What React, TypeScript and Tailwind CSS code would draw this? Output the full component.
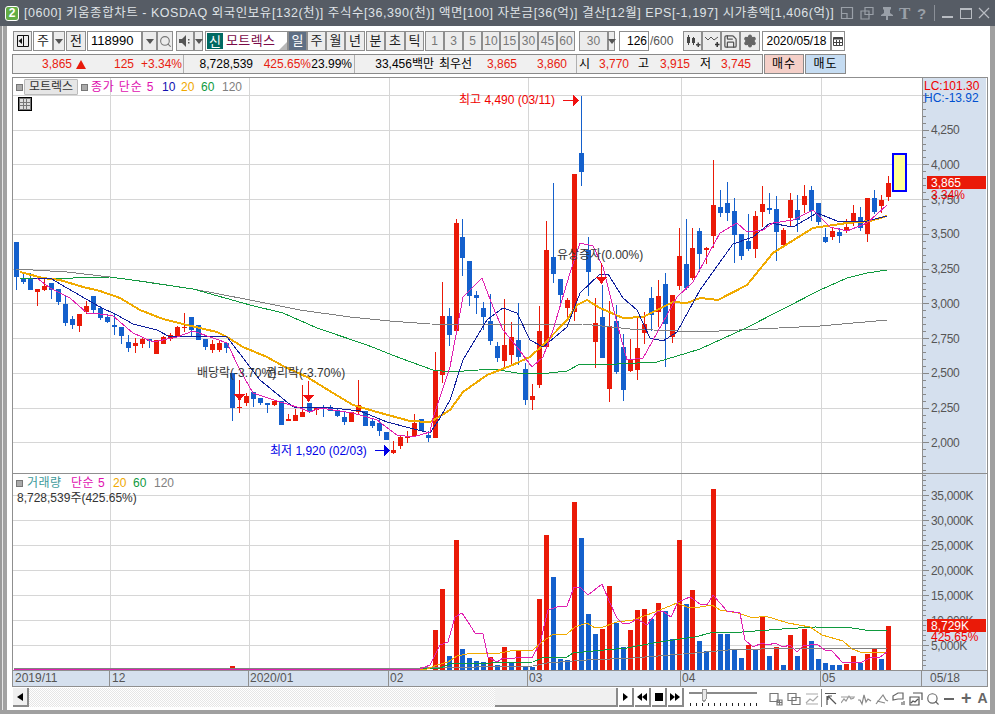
import { ReactNode } from "react";
import { Search, Save, Settings } from "lucide-react";
import { twMerge } from "tailwind-merge";

type Row = [number, number, number, number, string];

// body top, body bottom, wick top, wick bottom, colour (read off 3x crops, offset per segment)
const seg1: Row[] = [
  [36,140,36,180,"b"],[145,157,125,162,"b"],[145,180,130,180,"b"],[177,186,177,228,"r"],[167,180,142,183,"r"],
  [160,180,160,207,"b"],[177,215,177,225,"b"],[222,278,195,288,"b"],[267,285,258,298,"b"],[252,288,252,306,"r"],
  [228,247,212,252,"r"],[198,240,198,252,"b"],[233,264,228,270,"b"],[261,276,252,280,"b"],[285,290,252,316,"b"],
  [291,318,291,342,"b"],[336,354,316,366,"b"],[339,347,324,369,"r"],[326,342,322,356,"r"],[328,333,326,354,"b"],
  [331,372,331,372,"r"],[321,342,318,342,"r"],[315,326,309,333,"r"],[291,318,288,321,"r"],[291,294,249,306,"r"],
  [261,300,261,320,"b"],[285,330,285,330,"b"],[327,350,327,360,"b"],[342,360,330,369,"r"],[339,360,330,365,"r"],
  [339,354,339,369,"b"],[429,534,429,573,"b"],[530,534,510,549,"r"],[498,519,489,528,"r"],[486,507,486,531,"b"],
  [504,519,504,525,"b"],[519,525,519,549,"b"],[513,525,510,528,"r"],[513,585,513,585,"b"],[567,572,552,572,"r"],
  [555,572,537,572,"r"],[546,561,465,561,"r"],[519,546,519,549,"b"],[531,540,531,554,"r"],[534,537,525,561,"b"],
  [534,543,525,543,"b"],[543,558,537,561,"b"],[561,576,546,585,"b"],[546,576,546,576,"r"],[525,546,450,552,"r"],
  [543,588,543,588,"b"],[573,588,564,594,"b"],[579,603,567,618,"b"],[606,630,606,630,"b"],[660,669,633,672,"r"],
  [621,648,618,657,"r"],[618,624,603,639,"r"],[579,618,552,618,"r"],[567,603,567,603,"b"],[615,624,603,636,"b"],
  [423,624,366,624,"r"],[258,435,156,459,"r"],[258,315,234,348,"b"],
];
const seg2: Row[] = [
  [399,723,387,735,"r"],[441,504,387,558,"b"],[513,618,513,648,"b"],[615,624,603,672,"b"],[654,681,636,720,"b"],
  [693,753,612,765,"b"],[768,804,756,816,"b"],[765,813,627,831,"r"],[741,795,696,822,"r"],[750,801,639,825,"b"],
  [837,930,819,945,"b"],[918,930,882,960,"r"],[723,885,648,894,"r"],[480,771,393,771,"r"],[501,552,279,579,"b"],
  [567,615,567,642,"b"],[630,654,624,690,"r"],[252,666,252,693,"r"],[189,246,18,288,"b"],[480,546,441,618,"b"],
  [699,756,624,834,"r"],[681,804,585,804,"b"],[709,897,633,936,"r"],[693,846,645,852,"b"],[771,900,732,933,"b"],
  [810,843,747,846,"r"],[774,840,681,870,"r"],[702,729,666,762,"r"],[624,675,591,723,"b"],[618,666,570,711,"r"],
  [582,702,549,831,"b"],[615,741,615,759,"r"],[498,588,414,600,"r"],[522,594,387,600,"b"],[474,564,414,570,"r"],
];
const seg3: Row[] = [
  [303,372,294,426,"b"],[354,360,351,402,"r"],[225,318,90,354,"r"],[231,249,180,261,"b"],[219,249,156,273,"b"],
  [243,315,204,399,"b"],[312,378,312,390,"b"],[333,357,252,363,"b"],[258,357,243,384,"r"],[222,246,168,291,"r"],
  [234,240,189,252,"b"],[237,306,198,393,"b"],[300,345,294,351,"r"],[210,264,189,291,"r"],[240,270,195,306,"b"],
  [198,225,165,249,"r"],[180,243,168,273,"b"],[219,276,219,285,"b"],[321,336,294,339,"b"],[303,321,294,330,"r"],
  [306,318,294,339,"b"],[291,303,267,309,"r"],[249,276,225,288,"r"],[261,294,231,303,"b"],[204,312,204,336,"r"],
  [204,246,180,252,"b"],[210,228,195,249,"r"],[159,201,138,213,"r"],
];
const toReal = (rows: Row[], off: number): Row[] =>
  rows.map(([a, b, c, d, k]) => [off + a / 3, off + b / 3, off + c / 3, off + d / 3, k]);
const candles = [...toReal(seg1, 230), ...toReal(seg2, 90), ...toReal(seg3, 130)];
const cx = (i: number) => Math.round(16.4 + 6.97 * i);

const RED = "#ea1a08";
const BLUE = "#1460cc";

const ma120 = "16,269 67,272 110,277 147,282 193,289 250,300 300,310 350,317 390,321 430,324 530,325 583,324 630,329 700,332 758,329 820,326 887,320";
const ma60 = "20,278 73,278 110,277 132,280 193,289 250,305 283,313 317,328 367,345 400,358 433,370 450,372 493,369 517,373 540,374 567,371 580,364 617,364 657,362 687,353 700,349 744,329 820,290 847,278 867,273 887,270";
const ma20 = "20,272 43,278 60,280 83,287 100,291 120,298 140,310 163,319 187,325 217,332 227,337 243,347 267,357 283,366 307,377 333,393 353,405 377,412 410,421 430,422 437,418 450,410 463,392 487,375 510,366 530,357 543,345 567,320 577,305 587,300 600,308 623,318 643,317 673,302 687,303 700,298 718,300 747,285 773,253 797,238 813,228 847,223 870,221 887,216";
const ma10 = "33,278 50,278 67,288 100,307 117,315 133,324 157,330 170,337 197,336 227,337 260,380 293,407 333,408 360,411 387,422 410,428 430,433 440,418 450,400 463,360 487,320 503,308 517,313 530,340 543,347 567,327 580,293 600,274 608,274 623,298 637,310 650,338 663,341 677,332 700,290 720,262 733,244 753,237 770,223 793,227 817,213 837,221 863,222 887,216";
const ma5 = "37,278 50,288 70,298 87,313 100,314 113,316 133,333 153,342 177,337 193,331 213,338 227,343 240,370 253,393 277,401 300,408 310,412 320,408 353,413 377,420 397,435 413,437 430,432 433,418 450,367 463,297 482,278 493,307 503,330 517,347 532,367 543,357 553,330 570,273 580,243 593,246 603,267 617,323 627,360 643,358 657,333 677,297 693,282 720,233 737,223 747,232 763,230 773,223 793,220 813,210 830,227 847,231 867,223 887,205";

const volTops: [number, string][] = [
  [450,"r"],[327,"r"],[528,"b"],[180,"r"],[507,"b"],[534,"b"],[543,"b"],[546,"b"],[531,"r"],[555,"b"],
  [501,"r"],[546,"b"],[513,"r"],[557,"b"],[561,"b"],[357,"r"],[165,"r"],[291,"b"],[537,"b"],[540,"b"],
  [66,"r"],[174,"b"],[402,"b"],[462,"b"],[447,"r"],[318,"r"],[429,"b"],[501,"b"],[450,"r"],[390,"r"],
  [387,"r"],[417,"b"],[369,"r"],[393,"b"],[477,"b"],[180,"r"],[372,"b"],[330,"r"],[483,"b"],[513,"b"],
  [27,"r"],[462,"b"],[462,"b"],[507,"b"],[534,"b"],[495,"r"],[507,"b"],[411,"r"],[528,"b"],[501,"r"],
  [555,"b"],[465,"r"],[528,"b"],[447,"r"],[483,"b"],[537,"b"],[549,"b"],[555,"b"],[555,"b"],[552,"r"],
  [528,"r"],[549,"b"],[522,"r"],[504,"r"],[537,"b"],[438,"r"],
];

const vol5 = "14,669 420,669 430,665 440,645 448,642 455,617 462,613 468,622 475,633 483,634 488,657 497,662 503,658 512,659 518,657 532,658 540,643 548,610 557,607 567,606 574,587 580,587 588,595 602,584 610,603 617,618 623,624 630,623 637,619 647,625 657,612 663,611 671,617 678,602 690,597 700,604 707,605 713,595 727,611 740,613 745,640 753,647 762,643 768,645 775,643 783,647 790,645 797,652 803,646 817,644 825,650 832,651 843,663 862,662 872,657 880,657 887,652";
const vol20 = "14,669 427,669 437,665 448,662 457,656 467,654 487,653 500,653 515,650 533,650 542,642 552,635 567,634 575,627 587,623 595,628 603,627 617,622 633,620 647,615 660,610 677,603 687,607 700,607 712,605 720,610 738,613 753,618 765,616 788,623 810,627 822,635 843,641 852,649 863,653 887,652";
const vol60 = "14,669 420,669 440,668 450,664 533,662 542,658 567,657 573,653 593,651 627,648 653,643 680,639 695,637 710,633 742,632 782,629 815,627 852,628 872,631 887,630";
const vol120 = "14,668 420,668 533,666 547,663 587,660 633,658 695,653 728,650 795,648 887,648";

const vLines = [110, 249, 389, 528, 681, 821];
const priceLines = [95, 130, 164, 199, 234, 269, 303, 338, 373, 408, 442];
const volLines = [495, 520, 545, 570, 595, 620, 645];

const priceLabels: [string, number][] = [
  ["4,250", 129.6], ["4,000", 164.3], ["3,750", 199], ["3,500", 233.8], ["3,250", 268.6], ["3,000", 303.3],
  ["2,750", 338], ["2,500", 372.8], ["2,250", 407.6], ["2,000", 442.3],
];
const volLabels: [string, number][] = [
  ["35,000K", 495], ["30,000K", 520], ["25,000K", 545], ["20,000K", 570], ["15,000K", 595], ["10,000K", 620], ["5,000K", 645],
];

const Btn = ({ className = "", children }: { className?: string; children?: ReactNode }) => (
  <div className={twMerge("flex h-[20px] shrink-0 items-center justify-center border border-[#8e8e8e] bg-[#ececec] text-[13px] text-[#222]", className)}>
    {children}
  </div>
);

const Drop = ({ className = "" }: { className?: string }) => (
  <Btn className={className}>
    <span className="h-0 w-0 border-x-[4px] border-t-[5px] border-x-transparent border-t-[#555]" />
  </Btn>
);

const Marker = ({ className = "" }: { className?: string }) => (
  <span className={twMerge("h-[7px] w-[7px] shrink-0 border border-[#777] bg-[#aaa]", className)} />
);

const PriceChart = () => (
  <svg viewBox="13 78 909 395" width={909} height={395} className="block shrink-0">
    <g shapeRendering="crispEdges" stroke="#d6d6d6">
      {priceLines.map((y) => <line key={y} x1={13} x2={922} y1={y + 0.5} y2={y + 0.5} />)}
      {vLines.map((x) => <line key={x} x1={x + 0.5} x2={x + 0.5} y1={78} y2={473} />)}
    </g>
    <g shapeRendering="crispEdges">
      {candles.map(([a, b, c, d, k], i) => {
        const x = cx(i);
        const fill = k === "r" ? RED : BLUE;
        return (
          <g key={i} fill={fill}>
            <rect x={x} y={Math.round(c)} width={1} height={Math.max(1, Math.round(d - c))} />
            <rect x={x - 2} y={Math.round(a)} width={5} height={Math.max(1, Math.round(b - a))} />
          </g>
        );
      })}
    </g>
    <g fill="none" shapeRendering="crispEdges" strokeLinejoin="round">
      <polyline points={ma120} stroke="#808080" />
      <polyline points={ma60} stroke="#0f9a3e" />
      <polyline points={ma20} stroke="#f0aa00" strokeWidth={2} />
      <polyline points={ma10} stroke="#10209c" />
      <polyline points={ma5} stroke="#e020b0" />
    </g>
    <rect x={893} y={154} width={13} height={37} fill="#ffff99" stroke="#0000ff" strokeWidth={2} shapeRendering="crispEdges" />
    <g fill="#f01010" shapeRendering="crispEdges">
      <rect x={239} y={380} width={1} height={14} />
      <path d="M234 394h11l-5.500 7z" />
      <rect x={308} y={381} width={1} height={14} />
      <path d="M303 395h11l-5.500 7z" />
      <rect x={601} y={263} width={1} height={14} />
      <path d="M596 277h11l-5.500 7z" />
      <rect x={563} y={100} width={11} height={1} />
      <path d="M573 95l6 5.500-6 5.500z" />
    </g>
    <g fill="#0000e6" shapeRendering="crispEdges">
      <rect x={375} y={450} width={10} height={1} />
      <path d="M384 445l6 5.500-6 5.500z" />
    </g>
    <g fontSize={12}>
      <text x={197} y={377} fill="#333">배당락(-3.70%)</text>
      <text x={266} y={377} fill="#333">권리락(-3.70%)</text>
      <text x={557} y={259} fill="#333">유상증자(0.00%)</text>
      <text x={459} y={104} fill="#f00000">최고 4,490 (03/11)</text>
      <text x={270} y={455} fill="#0000e6">최저 1,920 (02/03)</text>
    </g>
  </svg>
);

const VolumeChart = () => (
  <svg viewBox="13 474 909 196" width={909} height={196} className="block shrink-0">
    <g shapeRendering="crispEdges" stroke="#d6d6d6">
      {volLines.map((y) => <line key={y} x1={13} x2={922} y1={y + 0.5} y2={y + 0.5} />)}
      {vLines.map((x) => <line key={x} x1={x + 0.5} x2={x + 0.5} y1={474} y2={670} />)}
    </g>
    <g shapeRendering="crispEdges">
      <rect x={14} y={668} width={2} height={2} fill={RED} />
      <rect x={230} y={666} width={5} height={4} fill={RED} />
      {volTops.map(([z, k], i) => {
        const top = Math.round(480 + z / 3);
        return <rect key={i} x={cx(i + 60) - 2} y={top} width={5} height={670 - top} fill={k === "r" ? RED : BLUE} />;
      })}
    </g>
    <g fill="none" shapeRendering="crispEdges">
      <polyline points={vol120} stroke="#808080" />
      <polyline points={vol60} stroke="#0f9a3e" />
      <polyline points={vol20} stroke="#f0aa00" />
      <polyline points={vol5} stroke="#e020b0" />
    </g>
  </svg>
);

const Axis = ({ y0, h, labels, step }: { y0: number; h: number; labels: [string, number][]; step: number }) => {
  const ticks: { y: number; major: boolean }[] = [];
  const first = labels[0][1];
  for (let n = -5; n < 60; n++) {
    const y = first + (n * step) / 5;
    if (y > y0 && y < y0 + h) ticks.push({ y: Math.round(y), major: ((n % 5) + 5) % 5 === 0 });
  }
  return (
    <svg viewBox={`923 ${y0} 64 ${h}`} width={64} height={h} className="absolute left-0 top-0 block">
      <g shapeRendering="crispEdges" stroke="#888">
        {ticks.map((t) => <line key={t.y} x1={923} x2={t.major ? 929 : 926} y1={t.y + 0.5} y2={t.y + 0.5} />)}
      </g>
      <g fontSize={12} fill="#555">
        {labels.map(([s, y]) => <text key={s} x={931} y={y + 4.500} letterSpacing={-0.35}>{s}</text>)}
      </g>
    </svg>
  );
};

const Stroke = ({ d, className = "" }: { d: string; className?: string }) => (
  <svg viewBox="0 0 14 14" className={twMerge("h-[14px] w-[14px]", className)} fill="none" stroke="currentColor" strokeWidth={1.2}>
    <path d={d} />
  </svg>
);

export default function App() {
  return (
    <div className="flex h-[714px] w-[995px] flex-col overflow-hidden bg-white text-[12px] text-black [font-family:'Liberation_Sans','Noto_Sans_CJK_KR',sans-serif]">
      {/* title bar */}
      <div className="flex h-[26px] shrink-0 items-center bg-[#565c65] pl-[5px] text-[#dfe2e6]">
        <div className="flex h-[15px] w-[14px] items-center justify-center rounded-[3px] border border-white bg-[#63ad45] text-[12px] font-bold leading-none text-white">2</div>
        <div className="ml-[5px] w-[812px] whitespace-nowrap text-[12.5px] tracking-[0.54px]">
          [0600] 키움종합차트 - KOSDAQ 외국인보유[132(천)] 주식수[36,390(천)] 액면[100] 자본금[36(억)] 결산[12월] EPS[-1,197] 시가총액[1,406(억)]
        </div>
        <div className="ml-[4px] flex items-center text-[#9aa0a8]">
          <Stroke d="M1.500 1.500h11v11h-11zM1.500 7.500h5.500v5" />
          <Stroke className="ml-[6px]" d="M5 1.500h8v7h-8zM1 5h8v8h-8z" />
          <svg viewBox="0 0 14 14" className="ml-[6px] h-[14px] w-[14px]" fill="currentColor"><path d="M3 1h8v2l-1 1v3l3 2v1H8v4H6v-4H1V9l3-2V4L3 3z" /></svg>
          <span className="ml-[5px] w-[13px] text-[17px] font-bold leading-none [font-family:'Liberation_Serif',serif]">T</span>
          <span className="ml-[5px] w-[12px] text-[15px] font-bold leading-none">?</span>
          <span className="ml-[5px] h-[16px] w-px bg-[#8b9098]" />
          <span className="ml-[7px] mt-[8px] h-[2px] w-[11px] bg-[#b8bcc2]" />
          <span className="ml-[7px] h-[11px] w-[12px] border border-t-2 border-[#b8bcc2]" />
          <Stroke className="ml-[5px] text-[#b8bcc2]" d="M2 2l10 10M12 2L2 12" />
        </div>
      </div>

      <div className="flex min-h-0 flex-1">
        {/* left window edge */}
        <div className="flex w-[7px] shrink-0">
          <div className="w-[2px] bg-[#9a9a9a]" />
          <div className="w-px bg-[#e6e6e6]" />
          <div className="w-[4px] bg-[#a2a2a2]" />
        </div>

        <div className="flex min-w-0 flex-1 flex-col pl-[5px]">
          {/* toolbar */}
          <div className="mt-[5px] flex h-[20px] shrink-0 pl-px">
            <Btn className="w-[19px]">
              <svg viewBox="0 0 14 14" className="h-[14px] w-[14px]"><path d="M1.500 1.500h11v11h-11z" fill="none" stroke="#111" /><path d="M6 4v6L2.500 7z" fill="#111" /><path d="M7 2h1v10H7z" fill="#111" /></svg>
            </Btn>
            <Btn className="ml-px w-[20px] bg-white">주</Btn>
            <Drop className="w-[12px]" />
            <Btn className="ml-px w-[20px]">전</Btn>
            <div className="ml-px flex h-[20px] w-[55px] items-center border border-[#8e8e8e] bg-white pl-[3px] text-[13px]">118990</div>
            <Drop className="w-[15px]" />
            <Btn className="w-[16px]"><Search size={13} className="text-[#777]" /></Btn>
            <Btn className="ml-[3px] w-[18px]">
              <svg viewBox="0 0 14 14" className="h-[14px] w-[14px]" fill="#555"><path d="M1 5h3l4-4v12l-4-4H1z" /><path d="M10 5h1.500v1.500H10zM10 8h1.500v1.500H10z" /></svg>
            </Btn>
            <Drop className="w-[9px]" />
            <div className="relative ml-[2px] flex h-[20px] w-[83px] items-center border border-[#8e8e8e] bg-white pl-px">
              <span className="flex h-[16px] w-[16px] items-center justify-center bg-[#006a62] text-[13px] leading-none text-white">신</span>
              <span className="ml-[3px] text-[13px] tracking-[0.4px] text-[#7a0a48]">모트렉스</span>
              <span className="absolute bottom-0 right-0 h-0 w-0 border-b-[8px] border-l-[8px] border-b-[#b8b8b8] border-l-transparent" />
            </div>
            <Btn className="w-[19px] bg-[#5f6f84] text-white">일</Btn>
            <Btn className="w-[19px]">주</Btn>
            <Btn className="w-[19px]">월</Btn>
            <Btn className="w-[20px]">년</Btn>
            <Btn className="ml-px w-[19px]">분</Btn>
            <Btn className="w-[20px]">초</Btn>
            <Btn className="w-[19px]">틱</Btn>
            <Btn className="ml-px w-[19px] text-[12px] text-[#777]">1</Btn>
            <Btn className="w-[19px] text-[12px] text-[#777]">3</Btn>
            <Btn className="w-[19px] text-[12px] text-[#777]">5</Btn>
            <Btn className="w-[18px] text-[12px] text-[#777]">10</Btn>
            <Btn className="w-[19px] text-[12px] text-[#777]">15</Btn>
            <Btn className="w-[19px] text-[12px] text-[#777]">30</Btn>
            <Btn className="w-[19px] text-[12px] text-[#777]">45</Btn>
            <Btn className="w-[18px] text-[12px] text-[#777]">60</Btn>
            <Btn className="ml-[4px] w-[29px] text-[12px] text-[#777]">30</Btn>
            <Drop className="w-[7px]" />
            <div className="ml-[4px] flex h-[20px] w-[30px] items-center justify-end border border-[#8e8e8e] bg-white pr-px">126</div>
            <span className="flex w-[34px] items-center pl-px text-[#555]">/600</span>
            <Btn className="w-[19px]">
              <svg viewBox="0 0 16 14" className="h-[14px] w-[16px]" fill="#444"><path d="M3 1h1v2h1v6H4v2H3V9H2V3h1zM8 3h1v1h1v5H9v2H8V9H7V4h1z" /><path d="M11 10h1.500V8.500H14V10h1.500v1.500H14V13h-1.500v-1.500H11z" /></svg>
            </Btn>
            <Btn className="w-[19px]">
              <svg viewBox="0 0 16 14" className="h-[14px] w-[16px]" fill="none" stroke="#555"><path d="M1 3l3 3 3-3 3 3 4-3" /><path d="M11 10.500h4.500M13.200 8v5" stroke="#333" strokeWidth={1.500} /></svg>
            </Btn>
            <Btn className="w-[19px]"><Save size={15} className="text-[#555]" /></Btn>
            <Btn className="w-[20px]"><Settings size={14} fill="#666" className="text-[#666]" /></Btn>
            <div className="ml-[2px] flex h-[20px] w-[69px] items-center justify-center border border-[#8e8e8e] bg-white">2020/05/18</div>
            <Btn className="w-[14px] bg-white">
              <svg viewBox="0 0 12 12" className="h-[12px] w-[12px]" fill="none" stroke="#444"><path d="M1.500 2.500h9v8h-9z" /><path d="M1.500 3.500h9" strokeWidth={2} /><path d="M4.500 5v5M7.500 5v5M2 7.500h8" /></svg>
            </Btn>
          </div>

          {/* quote strip */}
          <div className="mt-[3px] flex h-[20px] shrink-0">
            <div className="flex h-[20px] w-[751px] items-center border border-[#8a8a8a] bg-[#f0f0f0] text-[#e8200f]">
              <div className="flex h-full w-[171px] items-center border-r border-[#b0b0b0]">
                <span className="w-[59px] text-right">3,865</span>
                <span className="ml-[4px] h-0 w-0 border-x-[5px] border-b-[9px] border-x-transparent border-b-[#e8190a]" />
                <span className="w-[48px] text-right">125</span>
                <span className="w-[48px] text-right">+3.34%</span>
              </div>
              <div className="flex h-full w-[171px] items-center border-r border-[#b0b0b0]">
                <span className="w-[69px] text-right text-black">8,728,539</span>
                <span className="w-[58px] text-right">425.65%</span>
                <span className="w-[41px] text-right text-black">23.99%</span>
              </div>
              <div className="flex h-full w-[222px] items-center border-r border-[#b0b0b0]">
                <span className="w-[79px] text-right text-black">33,456백만</span>
                <span className="ml-[5px] w-[35px] text-black">최우선</span>
                <span className="w-[43px] text-right">3,865</span>
                <span className="w-[50px] text-right">3,860</span>
              </div>
              <div className="flex h-full items-center">
                <span className="ml-[2px] w-[10px] text-black">시</span>
                <span className="w-[40px] text-right">3,770</span>
                <span className="w-[20px] text-right text-black">고</span>
                <span className="w-[41px] text-right">3,915</span>
                <span className="w-[21px] text-right text-black">저</span>
                <span className="w-[40px] text-right">3,745</span>
              </div>
            </div>
            <div className="ml-[1px] flex h-[20px] w-[40px] items-center justify-center border border-[#8a8a8a] bg-[#f4cfc8] tracking-[1px]">매수</div>
            <div className="ml-[1px] flex h-[20px] w-[41px] items-center justify-center border border-[#8a8a8a] bg-[#c5dcf2] tracking-[1px]">매도</div>
          </div>

          {/* chart */}
          <div className="mt-[3px] flex w-[976px] shrink-0 flex-col border border-[#8f8f8f]">
            <div className="relative flex h-[396px] border-b border-[#8f8f8f]">
              <PriceChart />
              <div className="absolute left-[3px] top-[1px] flex h-[16px] items-center">
                <Marker />
                <span className="ml-px flex h-[16px] w-[54px] items-center justify-center rounded-[1px] border border-[#bbb] bg-[#e6e6e6] text-[#333]">모트렉스</span>
                <Marker className="ml-[3px]" />
                <span className="ml-[3px] w-[71px] tracking-[0.8px] text-[#e010b0]">종가 단순 5</span>
                <span className="w-[19px] text-[#1010b0]">10</span>
                <span className="w-[20px] text-[#f0a800]">20</span>
                <span className="w-[21px] text-[#0f9a3e]">60</span>
                <span className="text-[#808080]">120</span>
              </div>
              <div className="absolute left-[5px] top-[19px] grid h-[14px] w-[14px] grid-cols-3 grid-rows-3 gap-px border border-black bg-[#777] p-px">
                {[0, 1, 2, 3, 4, 5, 6, 7, 8].map((n) => <span key={n} className="bg-[#ddd]" />)}
              </div>
              <div className="relative w-[64px] shrink-0 border-l border-[#8f8f8f] bg-[#d5e0ee]">
                <Axis y0={78} h={395} labels={priceLabels} step={34.75} />
                <div className="absolute left-[1px] top-[2px] leading-[12px] text-[#f00000]">LC:101.30</div>
                <div className="absolute left-[1px] top-[14px] leading-[12px] text-[#0050d0]">HC:-13.92</div>
                <div className="absolute left-[4px] top-[98px] flex h-[13px] w-[59px] items-center bg-[#ea1a08] pl-[4px] text-white">3,865</div>
                <div className="absolute left-[8px] top-[111px] leading-[13px] text-[#f00000]">3.34%</div>
              </div>
            </div>

            <div className="relative flex h-[196px]">
              <VolumeChart />
              <div className="absolute left-[3px] top-[2px] flex h-[14px] items-center">
                <Marker />
                <span className="ml-[4px] w-[44px] tracking-[0.5px] text-[#3c9a9a]">거래량</span>
                <span className="w-[42px] tracking-[0.5px] text-[#e010b0]">단순 5</span>
                <span className="w-[20px] text-[#f0a800]">20</span>
                <span className="w-[21px] text-[#0f9a3e]">60</span>
                <span className="text-[#808080]">120</span>
              </div>
              <div className="absolute left-[4px] top-[15px] text-[#333]">8,728,539주(425.65%)</div>
              <div className="relative w-[64px] shrink-0 border-l border-[#8f8f8f] bg-[#d5e0ee]">
                <Axis y0={474} h={196} labels={volLabels} step={25} />
                <div className="absolute left-[4px] top-[145px] flex h-[13px] w-[59px] items-center bg-[#ea1a08] pl-[4px] text-white">8,729K</div>
                <div className="absolute left-[8px] top-[157px] leading-[13px] text-[#f00000]">425.65%</div>
              </div>
            </div>

            <div className="flex h-[16px] border-t border-[#8f8f8f] bg-[#d5e0ee] leading-[15px] text-[#555]">
              <div className="w-[97px] border-r border-[#8f8f8f] pl-[2px]">2019/11</div>
              <div className="w-[139px] border-r border-[#8f8f8f] pl-[2px]">12</div>
              <div className="w-[140px] border-r border-[#8f8f8f] pl-[1px]">2020/01</div>
              <div className="w-[139px] border-r border-[#8f8f8f] pl-[1px]">02</div>
              <div className="w-[153px] border-r border-[#8f8f8f] pl-[1px]">03</div>
              <div className="w-[140px] border-r border-[#8f8f8f] pl-[1px]">04</div>
              <div className="w-[101px] border-r border-[#8f8f8f] pl-[1px]">05</div>
              <div className="flex-1 pl-[8px]">05/18</div>
            </div>
          </div>

          {/* bottom bar */}
          <div className="mt-[1px] flex h-[21px] shrink-0 items-start pl-px">
            <div className="flex h-[19px] w-[16px] items-center justify-center border-b-2 border-r-2 border-[#8a8a8a] bg-[#f0f0f0]">
              <span className="h-0 w-0 border-y-[4px] border-r-[6px] border-y-transparent border-r-black" />
            </div>
            <div className="h-[19px] w-[466px] bg-[repeating-conic-gradient(#e6e6e6_0_25%,#ffffff_0_50%)] bg-[length:2px_2px]" />
            <div className="h-[19px] w-[123px] border-b-2 border-r-2 border-[#8a8a8a] bg-[#f0f0f0]" />
            <div className="ml-[1px] flex h-[19px] w-[15px] items-center justify-center border-b-2 border-r-2 border-[#8a8a8a] bg-white">
              <span className="h-0 w-0 border-y-[4px] border-l-[5px] border-y-transparent border-l-black" />
            </div>
            <div className="ml-[1px] flex h-[19px] w-[16px] items-center justify-center border-b-2 border-r-2 border-[#8a8a8a] bg-white">
              <span className="h-0 w-0 border-y-[4px] border-r-[5px] border-y-transparent border-r-black" />
              <span className="h-0 w-0 border-y-[4px] border-r-[5px] border-y-transparent border-r-black" />
            </div>
            <div className="ml-[1px] flex h-[19px] w-[15px] items-center justify-center border-b-2 border-r-2 border-[#8a8a8a] bg-white">
              <span className="h-[8px] w-[8px] bg-black" />
            </div>
            <div className="ml-[1px] flex h-[19px] w-[16px] items-center justify-center border-b-2 border-r-2 border-[#8a8a8a] bg-white">
              <span className="h-0 w-0 border-y-[4px] border-l-[5px] border-y-transparent border-l-black" />
              <span className="h-0 w-0 border-y-[4px] border-l-[5px] border-y-transparent border-l-black" />
            </div>
            <svg viewBox="0 0 80 20" className="ml-[3px] h-[20px] w-[80px]" shapeRendering="crispEdges">
              <rect x={2} y={4} width={68} height={2} fill="#8a8a8a" />
              <path d="M15 1h4v10l-2 3-2-3z" fill="#e8e8e8" stroke="#999" />
              {[3, 9, 15, 21, 27, 33, 39, 45, 51, 57, 63, 69].map((x) => <rect key={x} x={x} y={15} width={1} height={3} fill="#222" />)}
            </svg>
            <div className="ml-[2px] flex items-center text-[#777]">
              <Stroke d="M1 1.500h8v8H1zM8 8h5v5H8zM8 10.500h5M10.500 8v5" className="mt-[2px]" />
              <Stroke d="M1 1.500h8v7H1zM5 5.500h8v7H5z" className="ml-[4px] mt-[2px]" />
              <Stroke d="M1 2h12M1 12h12M1 11l4-4 3 2 5-5" className="ml-[4px] mt-[2px] text-[#aaa]" />
              <span className="ml-[2px] h-[18px] w-px bg-[#888]" />
              <Stroke d="M1 1.500h11M3 4v9M4 4l8 8M4 4h4M4 4v4" className="ml-[2px] mt-[2px] text-[#555]" />
              <Stroke d="M0 11l3-4 2 2 3-5 2 3 3-1M0 5h14" className="ml-[3px] mt-[2px] text-[#999]" />
              <Stroke d="M0 8h2l2 4 2-9 2 7 2-3 3 2" className="ml-[3px] mt-[2px] text-[#888]" />
              <Stroke d="M1 12l7-9 3 5 2 1M2 9l8 2" className="ml-[3px] mt-[2px] text-[#888]" />
              <Stroke d="M1 4l5-3h5v6H6l-5 1zM10 10v3M12 9v4" className="ml-[3px] mt-[2px] text-[#666]" />
              <Stroke d="M4 1h9v7M1 5h9v8H1zM2 11l2-2 2 1 3-3" className="ml-[3px] mt-[2px] text-[#555]" />
              <Search size={14} className="ml-[3px] mt-[2px] text-[#666]" />
              <span className="ml-[4px] mt-[2px] h-[2px] w-[10px] bg-[#666]" />
              <span className="ml-[7px] mt-[1px] text-[18px] font-bold leading-none text-[#666]">+</span>
              <span className="ml-[6px] mt-[1px] text-[14px] font-bold leading-none text-[#666]">A</span>
            </div>
          </div>
        </div>

        <div className="w-[5px] shrink-0 bg-[#a0a0a0]" />
      </div>
      <div className="h-[4px] shrink-0 bg-[#a0a0a0]" />
    </div>
  );
}
